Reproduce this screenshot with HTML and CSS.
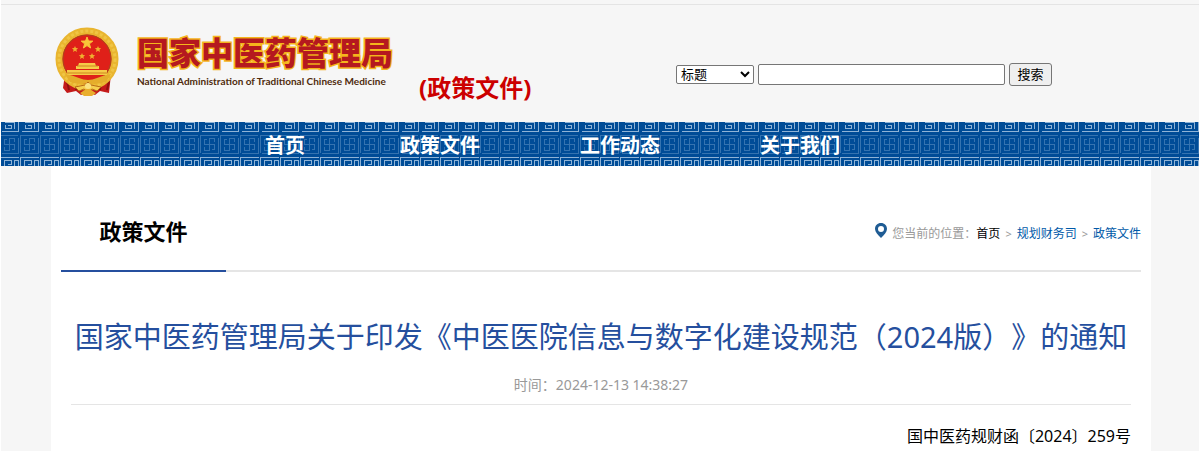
FILE: index.html
```
<!DOCTYPE html>
<html lang="zh-CN">
<head>
    <meta charset="UTF-8">
    <title>国家中医药管理局</title>
    <link rel="stylesheet" href="styles.css">
</head>
<body>
<div class="header">
    <a class="logo" href="#">
        <svg class="emblem" width="66" height="70" viewBox="0 0 66 70" aria-hidden="true">
            <path d="M10 46 L24 50 L33 57 L42 50 L56 46 L54 65 L45 63 L40 67 L33 64 L26 67 L21 63 L12 65 L8 60 Z" fill="#c41a1a"/>
            <path d="M12 53 L14 62 M20 54 L21 62 M54 53 L52 62 M46 54 L45 62" stroke="#8f1010" stroke-width="2"/>
            <circle cx="32" cy="31" r="28" fill="#df2019" stroke="#e9b52f" stroke-width="7"/>
            <circle cx="32" cy="31" r="28" fill="none" stroke="#f0c544" stroke-width="3" stroke-dasharray="3 2"/>
            <circle cx="32" cy="31" r="24" fill="none" stroke="#a9491b" stroke-width="1"/>
            <path d="M32 9 l1.500 4 4.300 .1 -3.400 2.700 1.200 4.200 -3.600 -2.400 -3.600 2.400 1.200 -4.200 -3.400 -2.700 4.300 -.1z" fill="#f9c638" stroke="#f9c638"/>
            <g fill="#efb02f">
                <path id="star" d="M20 18 l.9 2 2.200 .2 -1.700 1.500 .6 2.200 -2 -1.200 -2 1.200 .6 -2.200 -1.700 -1.500 2.200 -.2z"/>
                <use href="#star" x="23"/>
                <use href="#star" x="7" y="7"/>
                <use href="#star" x="17" y="7"/>
            </g>
            <path d="M24 35 H40 L41 38 H44 V41 H21 V38 H23 Z M12 42 H52 V47 H12 Z" fill="#f6cb48"/>
            <path d="M22 38 H43 M12 45 H52" stroke="#ce851f" stroke-width="1"/>
            <path d="M10 46 Q17 47 24 50 Q33 54 42 50 Q49 47 56 46 L51 54 Q42 57 33 55 Q24 57 15 54 Z" fill="#e5ad2b"/>
            <path d="M20 59 L30 57 L33 54 L36 57 L46 59 L42 63 L37 61 L33 64 L29 61 L24 63 Z" fill="#f6cf4f" stroke="#b96b16" stroke-width="1"/>
            <path d="M25 65 L33 60 L41 65 L37 68 H29 Z" fill="#e9ae2d"/>
            <circle cx="33" cy="58" r="3" fill="#fae282"/>
        </svg>
        <span class="logo-text">
            <span class="logo-cn">国家中医药管理局</span>
            <span class="logo-en">National Administration of Traditional Chinese Medicine</span>
        </span>
    </a>
    <span class="channel">(政策文件)</span>
    <form class="search">
        <select aria-label="搜索范围">
            <option>标题</option>
            <option>正文</option>
        </select>
        <input type="text" aria-label="关键词">
        <button type="button">搜索</button>
    </form>
</div>

<div class="nav">
    <svg class="nav-pattern" width="100%" height="44" aria-hidden="true">
        <defs>
            <pattern id="fret" x="-1" width="20" height="44" patternUnits="userSpaceOnUse">
                <g fill="none" stroke-width="1" shape-rendering="crispEdges">
                    <path stroke="#8fb3d6" d="M2 9.500 H18.500 V0 M5 .5 H15 M5.500 3 V6.500 H11.500 V3.500 H8 M14.500 0 V6.500"/>
                    <path stroke="#3573b0" d="M.5 31 V13.500 H17.500 M2 31.500 H18.500 V16 M4 22.500 H15 M9.500 16 V28 M9.500 16.500 H14.500 V20 M4.500 22.500 V17.500 H7 M9.500 28.500 H4.500 V25 M14.500 22.500 V27.500 H12"/>
                    <path stroke="#8fb3d6" d="M.5 44 V35.500 H18.500 M4.500 44 V38.500 H11.500 V42.500 H8 M14.500 44 V38.500 H18.500 V44"/>
                </g>
            </pattern>
        </defs>
        <rect width="100%" height="44" fill="url(#fret)"/>
    </svg>
    <ul>
        <li><a href="#">首页</a></li>
        <li><a href="#">政策文件</a></li>
        <li><a href="#">工作动态</a></li>
        <li><a href="#">关于我们</a></li>
    </ul>
</div>

<div class="container">
    <div class="title-bar">
        <h2>政策文件</h2>
        <div class="location">
            <svg width="12" height="16" viewBox="0 0 12 16" aria-hidden="true">
                <path fill="#1f5c94" fill-rule="evenodd" d="M6 0 C2.500 0 0 2.500 0 6 C0 9 3 12 6 15 C9 12 12 9 12 6 C12 2.500 9.500 0 6 0 Z M6 3 A3 3 0 1 1 6 9 A3 3 0 1 1 6 3 Z"/>
            </svg>
            <span>您当前的位置：<a class="home" href="#">首页</a></span>
            <span class="sep">&gt;</span>
            <a href="#">规划财务司</a>
            <span class="sep">&gt;</span>
            <a href="#">政策文件</a>
        </div>
    </div>
    <div class="article">
        <h1>国家中医药管理局关于印发《中医医院信息与数字化建设规范（2024版）》的通知</h1>
        <p class="date">时间：2024-12-13 14:38:27</p>
        <p class="number">国中医药规财函〔2024〕259号</p>
    </div>
</div>
</body>
</html>
```
FILE: styles.css
```
* {
    box-sizing: border-box;
}

body {
    margin: 0;
    font-family: "Noto Sans", "Noto Sans CJK SC", sans-serif;
    font-size: 12px;
    color: #000;
    background-color: #f6f6f6;
    border-left: 1px solid #fff;
    min-height: 100vh;
    display: flex;
    flex-direction: column;
    text-spacing-trim: space-all;
}

h1, h2, p, ul {
    margin: 0;
    padding: 0;
}

a {
    color: #0059a8;
    text-decoration: none;
}

/* header */
.header {
    display: flex;
    align-items: flex-start;
    margin-top: 4px;
    height: 118px;
    padding: 0 147px 0 54px;
    border-top: 1px solid #e4e4e4;
}

.logo {
    display: flex;
    gap: 16px;
    padding-top: 23px;
}

.emblem {
    overflow: visible;
}

.logo-text {
    display: flex;
    flex-direction: column;
    width: 258px;
    white-space: nowrap;
}

.logo-cn {
    font-family: "Noto Sans CJK SC", sans-serif;
    font-size: 32px;
    font-weight: 900;
    line-height: 46px;
    color: #b5191f;
    -webkit-text-stroke: 3px #f5b51c;
    paint-order: stroke fill;
}

.logo-en {
    font-family: Lato, sans-serif;
    font-size: 10px;
    font-weight: bold;
    line-height: 14px;
    color: #4f2b0c;
}

.channel {
    margin-left: 24px;
    padding-top: 66px;
    font-size: 24px;
    font-weight: bold;
    line-height: 34px;
    color: #c00;
    white-space: nowrap;
}

.search {
    display: flex;
    align-items: center;
    gap: 4px;
    margin-left: auto;
    padding-top: 58px;
}

.search select,
.search input,
.search button {
    font-family: "Liberation Sans", "Noto Sans CJK SC", sans-serif;
    font-size: 13px;
    color: #000;
    border: 1px solid #767676;
    border-radius: 2px;
}

.search select {
    width: 78px;
    height: 19px;
    padding: 0;
    line-height: 17px;
    background-color: #fff;
}

.search input {
    width: 247px;
    height: 21px;
    background-color: #fff;
}

.search button {
    width: 43px;
    height: 23px;
    padding: 0;
    line-height: 20px;
    background-color: #efefef;
    border-radius: 3px;
}

/* main menu */
.nav {
    position: relative;
    height: 44px;
    background-color: #004c97;
}

.nav-pattern {
    position: absolute;
    top: 0;
    left: 0;
}

.nav ul {
    position: relative;
    display: flex;
    padding-left: 219px;
    list-style: none;
}

.nav li {
    width: 180px;
    text-align: center;
    line-height: 48px;
}

.nav li:first-child {
    width: 130px;
}

.nav a {
    font-size: 20px;
    font-weight: bold;
    color: #fff;
}

/* content */
.container {
    flex: 1;
    margin: 0 48px 0 50px;
    padding: 32px 10px 0;
    background-color: #fff;
}

.title-bar {
    display: flex;
    justify-content: space-between;
    border-bottom: 2px solid #e5e5e5;
}

.title-bar h2 {
    width: 165px;
    height: 74px;
    margin-bottom: -2px;
    border-bottom: 2px solid #254f9e;
    font-size: 22px;
    line-height: 66px;
    text-align: center;
}

.location {
    display: flex;
    gap: 5px;
    color: #999;
    line-height: 72px;
}

.location svg {
    margin-top: 25px;
}

.location .home {
    color: #000;
}

.location .sep {
    font-size: 11px;
}

.article {
    padding: 38px 10px 0;
}

.article h1 {
    margin: 0 -10px;
    font-size: 29px;
    font-weight: normal;
    line-height: 54px;
    text-align: center;
    color: #254f9e;
    white-space: nowrap;
}

.date {
    padding: 11px 0 9px;
    font-size: 14px;
    line-height: 20px;
    text-align: center;
    color: #999;
    border-bottom: 1px solid #e5e5e5;
}

.number {
    padding-top: 16px;
    font-size: 16px;
    line-height: 30px;
    text-align: right;
}
```
